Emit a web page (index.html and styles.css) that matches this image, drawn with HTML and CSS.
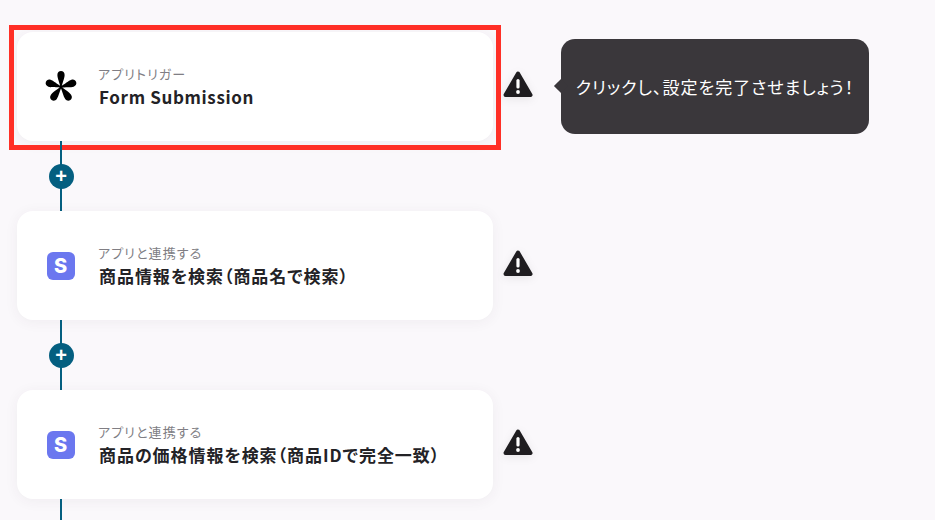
FILE: index.html
```html
<!DOCTYPE html>
<html lang="ja">
<head>
  <meta charset="UTF-8" />
  <meta name="viewport" content="width=device-width, initial-scale=1.0" />
  <title>Flow</title>
  <link rel="stylesheet" href="styles.css">
</head>
<body>
  <div class="flow">
    <!-- Trigger step -->
    <div class="step">
      <div class="card card-selected">
        <div class="card-icon">
          <svg width="34" height="34" viewBox="0 0 32 32">
            <g fill="#000">
              <path id="petal" d="M16 18 C14.4 11 12.6 7.6 12.6 4.6 C12.6 2.4 14 1 16 1 C18 1 19.4 2.4 19.4 4.6 C19.4 7.6 17.6 11 16 18 Z"/>
              <use href="#petal" transform="rotate(72 16 16)"/>
              <use href="#petal" transform="rotate(144 16 16)"/>
              <use href="#petal" transform="rotate(216 16 16)"/>
              <use href="#petal" transform="rotate(288 16 16)"/>
            </g>
          </svg>
        </div>
        <div class="card-text">
          <div class="card-label">アプリトリガー</div>
          <div class="card-title card-title-latin">Form Submission</div>
        </div>
      </div>
      <svg class="warn" width="30" height="27" viewBox="0 0 30 27">
        <path d="M15 2.5 L27.5 24 H2.5 Z" fill="#1f1d20" stroke="#1f1d20" stroke-width="4" stroke-linejoin="round"/>
        <rect x="13.4" y="8" width="3.2" height="9.5" rx="1.6" fill="#fff"/>
        <circle cx="15" cy="21" r="1.9" fill="#fff"/>
      </svg>
      <div class="tooltip">クリックし、設定を完了させましょう！</div>
    </div>

    <div class="connector"><span class="add">+</span></div>

    <div class="step">
      <div class="card">
        <div class="card-icon">
          <div class="stripe">S</div>
        </div>
        <div class="card-text">
          <div class="card-label">アプリと連携する</div>
          <div class="card-title">商品情報を検索（商品名で検索）</div>
        </div>
      </div>
      <svg class="warn" width="30" height="27" viewBox="0 0 30 27">
        <path d="M15 2.5 L27.5 24 H2.5 Z" fill="#1f1d20" stroke="#1f1d20" stroke-width="4" stroke-linejoin="round"/>
        <rect x="13.4" y="8" width="3.2" height="9.5" rx="1.6" fill="#fff"/>
        <circle cx="15" cy="21" r="1.9" fill="#fff"/>
      </svg>
    </div>

    <div class="connector"><span class="add">+</span></div>

    <div class="step">
      <div class="card">
        <div class="card-icon">
          <div class="stripe">S</div>
        </div>
        <div class="card-text">
          <div class="card-label">アプリと連携する</div>
          <div class="card-title">商品の価格情報を検索（商品IDで完全一致）</div>
        </div>
      </div>
      <svg class="warn" width="30" height="27" viewBox="0 0 30 27">
        <path d="M15 2.5 L27.5 24 H2.5 Z" fill="#1f1d20" stroke="#1f1d20" stroke-width="4" stroke-linejoin="round"/>
        <rect x="13.4" y="8" width="3.2" height="9.5" rx="1.6" fill="#fff"/>
        <circle cx="15" cy="21" r="1.9" fill="#fff"/>
      </svg>
    </div>

    <div class="connector connector-end"></div>
  </div>
</body>
</html>
```

FILE: styles.css
```css
html, body {
  height: 100%;
}
body {
  font-family: "Noto Sans CJK JP", "Noto Sans", sans-serif;
  font-feature-settings: "palt";
  background-color: #faf8fb;
  color: #232226;
  margin: 0;
  overflow: hidden;
}
.flow {
  padding: 32px 0 0 17px;
}
.step {
  display: flex;
  align-items: center;
}
.card {
  position: relative;
  display: flex;
  align-items: center;
  width: 476px;
  height: 109px;
  box-sizing: border-box;
  background: white;
  border-radius: 16px;
  box-shadow: 0 2px 14px rgba(60, 50, 70, 0.06);
}
/* red annotation frame around the first card */
.card-selected::after {
  content: "";
  position: absolute;
  top: -7px;
  left: -8px;
  right: -8px;
  bottom: -9px;
  border: 5px solid #ff2f26;
}
.card-icon {
  width: 81px;
  display: flex;
  justify-content: center;
  padding-left: 6px;
  box-sizing: border-box;
}
.card-label {
  font-size: 13px;
  line-height: 18px;
  font-weight: 400;
  color: #807e84;
  letter-spacing: 1.1px;
}
.card-title {
  margin-top: 2px;
  padding-left: 1px;
  font-size: 17px;
  line-height: 24px;
  font-weight: 600;
  letter-spacing: 0.95px;
}
.card-title-latin {
  letter-spacing: 0.65px;
}
.stripe {
  width: 28px;
  height: 28px;
  border-radius: 6px;
  background-color: #6b77ef;
  color: white;
  font-family: "Inter", sans-serif;
  font-size: 20px;
  font-weight: 800;
  line-height: 28px;
  text-align: center;
}
.warn {
  margin-left: 10px;
  margin-top: -5px;
  flex-shrink: 0;
  filter: drop-shadow(0 2px 4px rgba(0, 0, 0, 0.08));
}
.tooltip {
  position: relative;
  display: flex;
  align-items: center;
  justify-content: center;
  width: 308px;
  height: 95px;
  margin-left: 28px;
  box-sizing: border-box;
  background-color: #3a373b;
  color: white;
  border-radius: 14px;
  font-size: 17px;
  font-weight: 400;
  letter-spacing: 1px;
  white-space: nowrap;
}
.tooltip::before {
  content: "";
  position: absolute;
  left: -5px;
  top: 42px;
  width: 10px;
  height: 10px;
  background-color: #3a373b;
  transform: rotate(45deg);
}
.connector {
  position: relative;
  width: 2px;
  height: 70px;
  margin-left: 43px;
  background-color: #045f80;
  display: flex;
  align-items: center;
  justify-content: center;
}
.connector-end {
  height: 21px;
}
.add {
  flex-shrink: 0;
  width: 25px;
  height: 25px;
  border-radius: 50%;
  background-color: #045f80;
  color: white;
  font-family: "Liberation Sans", sans-serif;
  font-size: 20px;
  font-weight: 700;
  line-height: 25px;
  text-align: center;
}
```
